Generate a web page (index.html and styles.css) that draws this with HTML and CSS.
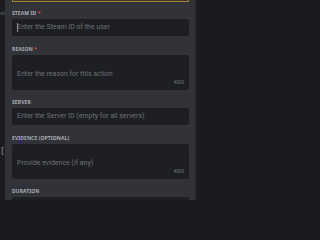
FILE: index.html
```html
<!DOCTYPE html>
<html>
<head>
<meta charset="utf-8">
<link rel="stylesheet" href="styles.css">
</head>
<body>
<div class="screen">
  <div class="behind">
    <span class="behind-a">st</span>
    <span class="behind-b">[</span>
  </div>
  <div class="modal">
    <div class="notice"></div>
    <div class="field">
      <div class="label">Steam ID <span class="req">*</span></div>
      <div class="input"><span class="caret"></span><span class="ph">Enter the Steam ID of the user</span></div>
    </div>
    <div class="field">
      <div class="label">Reason <span class="req">*</span></div>
      <div class="textarea"><span class="ph">Enter the reason for this action</span><span class="count">4000</span></div>
    </div>
    <div class="field">
      <div class="label">Server</div>
      <div class="input"><span class="ph">Enter the Server ID (empty for all servers)</span></div>
    </div>
    <div class="field">
      <div class="label">Evidence (optional)</div>
      <div class="textarea"><span class="ph">Provide evidence (if any)</span><span class="count">4000</span></div>
    </div>
    <div class="field">
      <div class="label">Duration</div>
      <div class="input"></div>
    </div>
  </div>
  <div class="track"></div>
  <div class="edge"></div>
</div>
</body>
</html>
```
FILE: styles.css
```css
html, body {
  margin: 0;
  padding: 0;
  background: #1a1b1e;
}
.screen {
  display: flex;
  width: 200px;
  height: 200px;
  overflow: hidden;
  font-family: "Noto Sans", "Open Sans", sans-serif;
}
.behind {
  width: 5px;
  flex: none;
  overflow: hidden;
  display: flex;
  flex-direction: column;
  background: #1b1c1f;
}
.behind-a {
  margin-top: 10px;
  font-size: 6px;
  line-height: 6px;
  color: #5b5e64;
  white-space: nowrap;
}
.behind-b {
  margin-top: 130px;
  font-size: 9px;
  line-height: 9px;
  color: #8a8d92;
  margin-left: 1px;
}
.modal {
  width: 189px;
  flex: none;
  background: #313338;
  padding: 0 5px 0 7px;
  box-sizing: border-box;
  display: flex;
  flex-direction: column;
}
.notice {
  height: 1px;
  border: 1px solid #a5842f;
  border-top: none;
  background: #3a3630;
  margin-bottom: 8px;
  flex: none;
}
.field {
  display: flex;
  flex-direction: column;
  gap: 3px;
  margin-bottom: 9.5px;
  flex: none;
}
.label {
  font-size: 5px;
  line-height: 6px;
  height: 6px;
  font-weight: 700;
  text-transform: uppercase;
  letter-spacing: 0.02em;
  color: #a9adb4;
}
.req {
  color: #e5484b;
}
.input {
  height: 17px;
  background: #1e1f22;
  border-radius: 2px;
  display: flex;
  align-items: center;
  padding: 0 5px;
  position: relative;
  flex: none;
}
.textarea {
  height: 35px;
  background: #1e1f22;
  border-radius: 2px;
  padding: 4px 5px 0;
  box-sizing: border-box;
  position: relative;
  flex: none;
}
.ph {
  font-family: Roboto, "Noto Sans", sans-serif;
  font-size: 7px;
  line-height: 9px;
  color: #6d6f77;
  white-space: nowrap;
}
.caret {
  position: absolute;
  left: 5px;
  top: 4px;
  width: 1px;
  height: 9px;
  background: #8b8e93;
}
.count {
  position: absolute;
  right: 5px;
  bottom: 5px;
  font-size: 4.5px;
  line-height: 5px;
  color: #7d8087;
}
.track {
  width: 2px;
  flex: none;
  background: #2b2d31;
}
.edge {
  flex: 1;
  background: #1a1b1e;
}
```
